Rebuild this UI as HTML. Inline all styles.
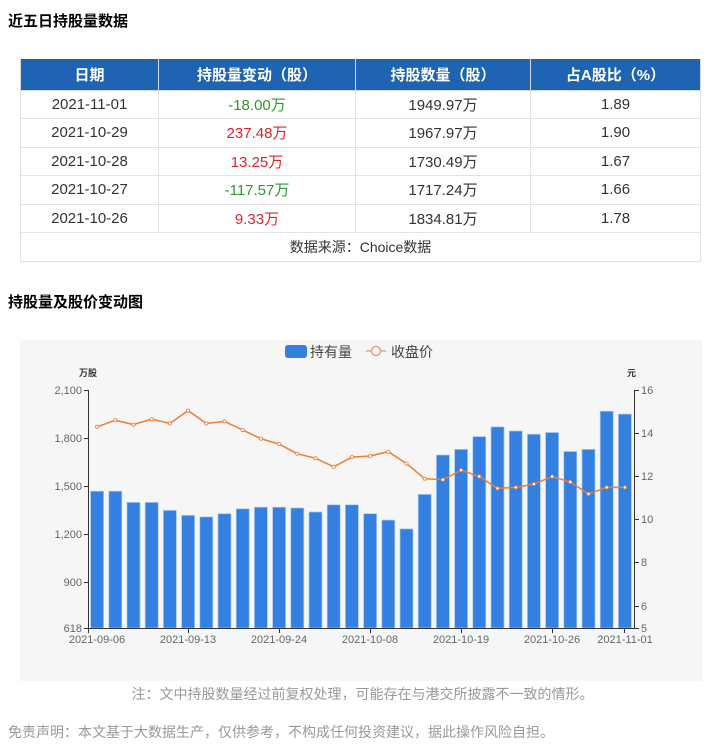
<!DOCTYPE html>
<html><head><meta charset="utf-8"><style>
*{margin:0;padding:0;box-sizing:border-box}
body{width:725px;height:751px;background:#fff;font-family:"Liberation Sans","Noto Sans CJK SC",sans-serif;position:relative;overflow:hidden}
.t{position:absolute;left:8px;font-size:15px;font-weight:bold;color:#000}
table{position:absolute;left:20px;top:59px;width:681px;border-collapse:collapse;font-size:15px;color:#333}
th{background:#1f64b2;color:#fff;height:31px;font-weight:bold;font-size:15px;border:1px solid #d8d8d8;border-top:none}
td{height:28.5px;text-align:center;border:1px solid #e2e2e2}
.g{color:#2a9a2a}.r{color:#e3232c}
.n{position:absolute;font-size:14px;color:#999}
</style></head><body>
<div class="t" style="top:10px">近五日持股量数据</div>
<table>
<tr><th style="width:138px">日期</th><th style="width:197px">持股量变动（股）</th><th style="width:175px">持股数量（股）</th><th>占A股比（%）</th></tr>
<tr><td>2021-11-01</td><td class="g">-18.00万</td><td>1949.97万</td><td>1.89</td></tr>
<tr><td>2021-10-29</td><td class="r">237.48万</td><td>1967.97万</td><td>1.90</td></tr>
<tr><td>2021-10-28</td><td class="r">13.25万</td><td>1730.49万</td><td>1.67</td></tr>
<tr><td>2021-10-27</td><td class="g">-117.57万</td><td>1717.24万</td><td>1.66</td></tr>
<tr><td>2021-10-26</td><td class="r">9.33万</td><td>1834.81万</td><td>1.78</td></tr>
<tr><td colspan="4" style="font-size:14px">数据来源：Choice数据</td></tr>
</table>
<div class="t" style="top:291px">持股量及股价变动图</div>
<svg style="position:absolute;left:0;top:0" width="725" height="751" font-family="Liberation Sans,Noto Sans CJK SC,sans-serif">
<rect x="20" y="340" width="682" height="341" fill="#f6f6f6"/>
<rect x="285" y="345" width="22" height="13" rx="3" fill="#3380e0"/>
<text x="310" y="357" font-size="14" fill="#444">持有量</text>
<line x1="366" y1="351" x2="386" y2="351" stroke="#f0a070" stroke-width="1.5"/>
<circle cx="376" cy="351" r="4.5" fill="#fff" stroke="#f0a070" stroke-width="1.5"/>
<text x="391" y="357" font-size="14" fill="#444">收盘价</text>
<text x="79" y="376" font-size="9" font-weight="bold" fill="#333">万股</text>
<text x="627" y="376" font-size="9" font-weight="bold" fill="#333">元</text>
<g fill="#3380e0" stroke="#a9c9f2" stroke-width="0.7">
<rect x="90.6" y="491.2" width="13" height="136.8"/><rect x="108.8" y="491.2" width="13" height="136.8"/>
<rect x="127" y="502.4" width="13" height="125.6"/><rect x="145.2" y="502.4" width="13" height="125.6"/>
<rect x="163.4" y="510.4" width="13" height="117.6"/><rect x="181.6" y="515.3" width="13" height="112.7"/>
<rect x="199.8" y="516.9" width="13" height="111.1"/><rect x="218" y="513.7" width="13" height="114.3"/>
<rect x="236.2" y="508.8" width="13" height="119.2"/><rect x="254.4" y="507.2" width="13" height="120.8"/>
<rect x="272.6" y="507.2" width="13" height="120.8"/><rect x="290.8" y="508" width="13" height="120"/>
<rect x="309" y="512" width="13" height="116"/><rect x="327.2" y="504.8" width="13" height="123.2"/>
<rect x="345.4" y="504.8" width="13" height="123.2"/><rect x="363.6" y="513.7" width="13" height="114.3"/>
<rect x="381.8" y="520.1" width="13" height="107.9"/><rect x="400" y="528.9" width="13" height="99.1"/>
<rect x="418.2" y="494.4" width="13" height="133.6"/><rect x="436.4" y="455" width="13" height="173"/>
<rect x="454.6" y="449.4" width="13" height="178.6"/><rect x="472.8" y="436.6" width="13" height="191.4"/>
<rect x="491" y="426.9" width="13" height="201.1"/><rect x="509.2" y="431" width="13" height="197"/>
<rect x="527.4" y="434.2" width="13" height="193.8"/><rect x="545.6" y="432.5" width="13" height="195.5"/>
<rect x="563.8" y="451.5" width="13" height="176.5"/><rect x="582" y="449.4" width="13" height="178.6"/>
<rect x="600.2" y="411.2" width="13" height="216.8"/><rect x="618.4" y="414.1" width="13" height="213.9"/>
</g>
<polyline fill="none" stroke="#ee7d33" stroke-width="1.5" points="97.1,426.8 115.3,420.3 133.5,424.6 151.7,419.2 169.9,423.5 188.1,410.6 206.3,423.5 224.5,421.4 242.7,430 260.9,438.7 279.1,444.1 297.3,453.8 315.5,458.2 333.7,466.8 351.9,457.1 370.1,456 388.3,451.7 406.5,463.6 424.7,478.7 442.9,479.8 461.1,470.1 479.3,476.5 497.5,488.4 515.7,487.4 533.9,484.1 552.1,476.5 570.3,482 588.5,493.9 606.7,487.4 624.9,487.4"/>
<g fill="#fff" stroke="#ee7d33" stroke-width="0.8">
<circle cx="97.1" cy="426.8" r="1.6"/><circle cx="115.3" cy="420.3" r="1.6"/><circle cx="133.5" cy="424.6" r="1.6"/><circle cx="151.7" cy="419.2" r="1.6"/><circle cx="169.9" cy="423.5" r="1.6"/><circle cx="188.1" cy="410.6" r="1.6"/><circle cx="206.3" cy="423.5" r="1.6"/><circle cx="224.5" cy="421.4" r="1.6"/><circle cx="242.7" cy="430" r="1.6"/><circle cx="260.9" cy="438.7" r="1.6"/><circle cx="279.1" cy="444.1" r="1.6"/><circle cx="297.3" cy="453.8" r="1.6"/><circle cx="315.5" cy="458.2" r="1.6"/><circle cx="333.7" cy="466.8" r="1.6"/><circle cx="351.9" cy="457.1" r="1.6"/><circle cx="370.1" cy="456" r="1.6"/><circle cx="388.3" cy="451.7" r="1.6"/><circle cx="406.5" cy="463.6" r="1.6"/><circle cx="424.7" cy="478.7" r="1.6"/><circle cx="442.9" cy="479.8" r="1.6"/><circle cx="461.1" cy="470.1" r="1.6"/><circle cx="479.3" cy="476.5" r="1.6"/><circle cx="497.5" cy="488.4" r="1.6"/><circle cx="515.7" cy="487.4" r="1.6"/><circle cx="533.9" cy="484.1" r="1.6"/><circle cx="552.1" cy="476.5" r="1.6"/><circle cx="570.3" cy="482" r="1.6"/><circle cx="588.5" cy="493.9" r="1.6"/><circle cx="606.7" cy="487.4" r="1.6"/><circle cx="624.9" cy="487.4" r="1.6"/>
</g>
<g stroke="#333" stroke-width="1" fill="none">
<path d="M88.5 390V628.5H634.5V390"/>
<path d="M84 390.5h5M84 438.5h5M84 486.5h5M84 534.5h5M84 582.5h5M84 628.5h5"/>
<path d="M634 390.5h5M634 433.5h5M634 476.5h5M634 519.5h5M634 562.5h5M634 606.5h5M634 628.5h5"/>
<path d="M88.5 628v5M188.5 628v5M279.5 628v5M370.5 628v5M461.5 628v5M552.5 628v5M624.5 628v5"/>
</g>
<g font-size="11" fill="#666" text-anchor="end">
<text x="82" y="394">2,100</text><text x="82" y="442">1,800</text><text x="82" y="490">1,500</text><text x="82" y="538">1,200</text><text x="82" y="586">900</text><text x="82" y="632">618</text>
</g>
<g font-size="11" fill="#666">
<text x="641" y="394">16</text><text x="641" y="437">14</text><text x="641" y="480">12</text><text x="641" y="523">10</text><text x="641" y="566">8</text><text x="641" y="610">6</text><text x="641" y="632">5</text>
</g>
<g font-size="11" fill="#666" text-anchor="middle">
<text x="97" y="643">2021-09-06</text><text x="188" y="643">2021-09-13</text><text x="279" y="643">2021-09-24</text><text x="370" y="643">2021-10-08</text><text x="461" y="643">2021-10-19</text><text x="552" y="643">2021-10-26</text><text x="625" y="643">2021-11-01</text>
</g>
</svg>
<div class="n" style="left:0;width:725px;text-align:center;top:684px">注：文中持股数量经过前复权处理，可能存在与港交所披露不一致的情形。</div>
<div class="n" style="left:8px;top:722px">免责声明：本文基于大数据生产，仅供参考，不构成任何投资建议，据此操作风险自担。</div>
</body></html>
